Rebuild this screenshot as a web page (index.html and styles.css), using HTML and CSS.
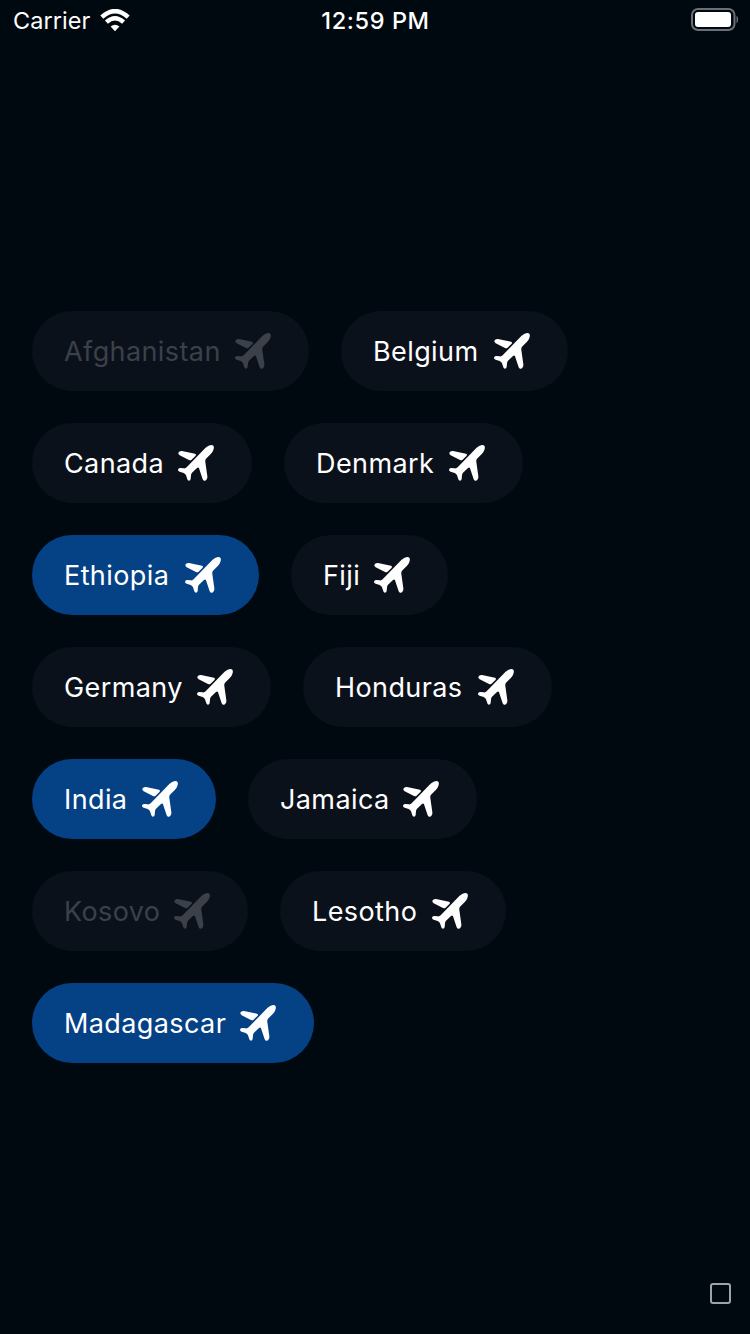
FILE: index.html
```
<!DOCTYPE html>
<html lang="en">
<head>
<meta charset="utf-8">
<title>Destinations</title>
<link rel="stylesheet" href="styles.css">
</head>
<body>
<svg width="0" height="0" class="defs">
  <symbol id="plane" viewBox="42 39 108 108">
    <path d="M43 62Q46 56 54 57L93 65Q98 67 95 71L82 84Q79 86 75 84L47 70Q42 66 43 62Z"/>
    <path d="M148 41Q151 45 148 54Q146 60 141 65L126 80Q123 84 124 90L130 133Q131 143 124 146Q119 148 116 142L105 109Q103 104 99 108L84 122Q81 125 81 130L80 141Q79 146 75 146Q71 146 70 142L66 130Q64 125 59 123L47 119Q42 117 42 113Q43 109 48 108L59 109Q64 110 68 106L124 48Q129 43 134 41Q144 37 148 41Z"/>
  </symbol>
</svg>
<div class="screen">
  <header class="status">
    <div class="carrier">Carrier
      <svg class="wifi" viewBox="0 0 30 23" width="30" height="23">
        <path d="M1.8 8.2Q15-4 28.2 8.2" class="arc"/>
        <path d="M6.4 13.1Q15 5.3 23.6 13.1" class="arc"/>
        <path d="M15 22.2L10.600 17.600Q15 14 19.400 17.600Z"/>
      </svg>
    </div>
    <div class="time">12:59 PM</div>
    <div class="power">
      <svg viewBox="0 0 48 24" width="48" height="24">
        <rect x="2" y="1" width="42.500" height="21" rx="6" class="shell"/>
        <rect x="5" y="4" width="36" height="15" rx="3"/>
        <path d="M46.500 7.500Q50 11.500 46.500 15.500Z" class="tip"/>
      </svg>
    </div>
  </header>
  <main class="chips">
    <div class="chip disabled" style="width:277px"><span>Afghanistan</span><svg><use href="#plane"/></svg></div>
    <div class="chip" style="width:227px"><span>Belgium</span><svg><use href="#plane"/></svg></div>
    <div class="chip" style="width:220px"><span>Canada</span><svg><use href="#plane"/></svg></div>
    <div class="chip" style="width:239px"><span>Denmark</span><svg><use href="#plane"/></svg></div>
    <div class="chip selected" style="width:227px"><span>Ethiopia</span><svg><use href="#plane"/></svg></div>
    <div class="chip" style="width:157px"><span>Fiji</span><svg><use href="#plane"/></svg></div>
    <div class="chip" style="width:239px"><span>Germany</span><svg><use href="#plane"/></svg></div>
    <div class="chip" style="width:249px"><span>Honduras</span><svg><use href="#plane"/></svg></div>
    <div class="chip selected" style="width:184px"><span>India</span><svg><use href="#plane"/></svg></div>
    <div class="chip" style="width:229px"><span>Jamaica</span><svg><use href="#plane"/></svg></div>
    <div class="chip disabled" style="width:216px"><span>Kosovo</span><svg><use href="#plane"/></svg></div>
    <div class="chip" style="width:226px"><span>Lesotho</span><svg><use href="#plane"/></svg></div>
    <div class="chip selected" style="width:282px"><span>Madagascar</span><svg><use href="#plane"/></svg></div>
  </main>
  <footer class="corner"><div class="square"></div></footer>
</div>
</body>
</html>
```
FILE: styles.css
```
body {
  margin: 0;
  background: #000810;
  color: #fff;
  font-family: Inter, "Liberation Sans", sans-serif;
}
.defs { position: absolute; }
.screen {
  box-sizing: border-box;
  height: 1334px;
  display: flex;
  flex-direction: column;
}
.status {
  height: 40px;
  display: grid;
  grid-template-columns: 1fr auto 1fr;
  align-items: center;
  padding: 0 12px 0 13px;
  line-height: 42px;
}
.carrier { display: flex; align-items: center; gap: 10px; font-size: 23.5px; letter-spacing: 0.05px; }
.wifi, .power svg { fill: #fff; margin-bottom: 2px; }
.arc { fill: none; stroke: #fff; stroke-width: 4.4; }
.time { font-weight: 550; font-size: 23.5px; letter-spacing: 0.6px; }
.power { display: flex; justify-content: flex-end; }
.shell { fill: none; stroke: #6b6f76; stroke-width: 2; }
.tip { fill: #6b6f76; }
.chips {
  flex: 1;
  width: 640px;
  display: flex;
  flex-wrap: wrap;
  align-content: center;
  gap: 32px;
  padding: 30px 32px 0;
}
.chip {
  box-sizing: border-box;
  height: 80px;
  border-radius: 40px;
  padding: 0 38px 0 32px;
  display: flex;
  align-items: center;
  justify-content: space-between;
  background: #0b111b;
  font-size: 27px;
  font-weight: 390;
  letter-spacing: 0.4px;
  white-space: nowrap;
}
.chip svg { flex: none; width: 36px; height: 36px; fill: #fff; }
.chip.selected { background: #054185; }
.chip.disabled { color: #3c4048; }
.chip.disabled svg { fill: #3c4048; }
.corner { height: 0; display: flex; justify-content: flex-end; align-items: flex-end; padding: 0 19px 30px 0; }
.square { box-sizing: border-box; width: 21px; height: 21px; border: 2px solid #a0a3a6; border-radius: 3px; }
```
